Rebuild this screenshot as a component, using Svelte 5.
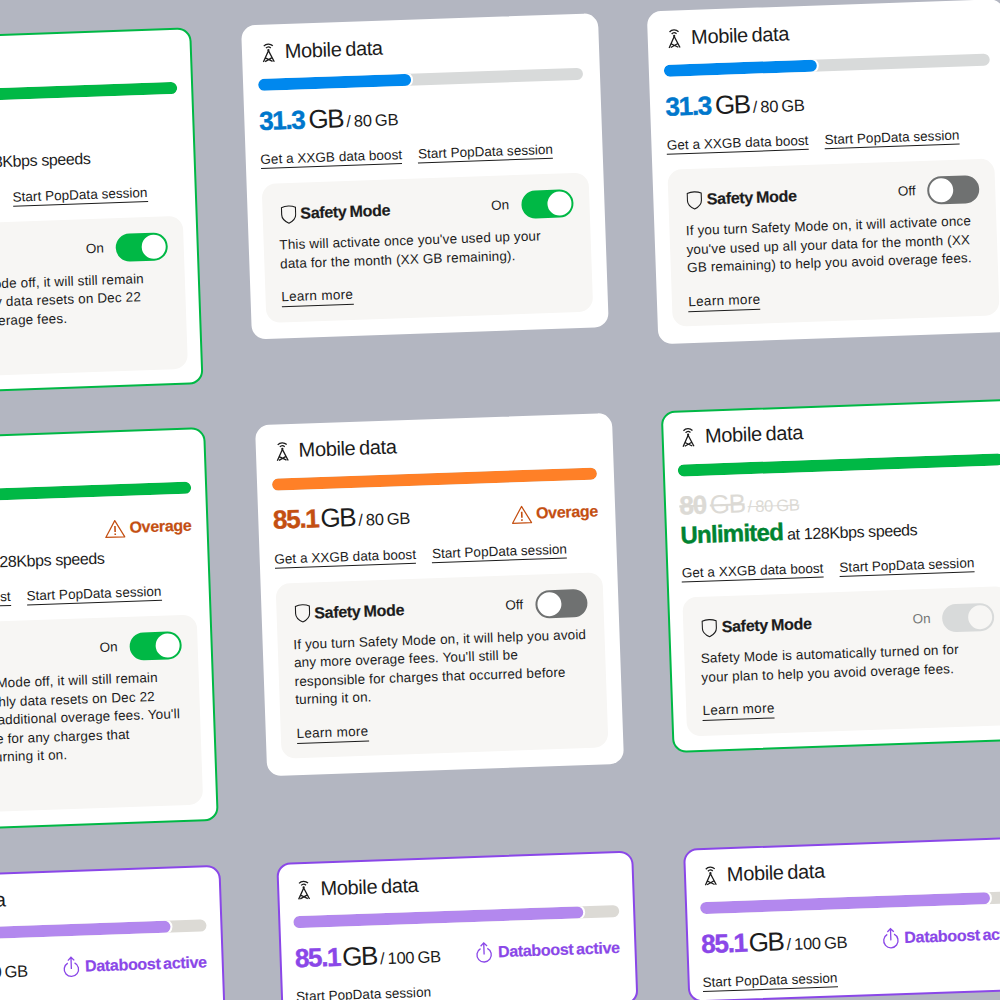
<script>
    const links = ["Get a XXGB data boost", "Start PopData session"];

    const cards = [
        {
            tone: "green", bordered: true, compact: true, fill: 100, used: "80", total: "80 GB", spent: true,
            links, toggle: "on",
            body: ["If you turn Safety Mode off, it will still remain", "on until your monthly data resets on Dec 22", "to help you avoid overage fees."]
        },
        {
            tone: "blue", fill: 47, used: "31.3", total: "80 GB",
            links, toggle: "on",
            body: ["This will activate once you've used up your", "data for the month (XX GB remaining)."]
        },
        {
            tone: "blue", fill: 47, used: "31.3", total: "80 GB",
            links, toggle: "off",
            body: ["If you turn Safety Mode on, it will activate once", "you've used up all your data for the month (XX", "GB remaining) to help you avoid overage fees."]
        },
        {
            tone: "green", bordered: true, compact: true, fill: 100, used: "80", total: "80 GB", spent: true, status: "overage",
            links, toggle: "on",
            body: ["If you turn Safety Mode off, it will still remain", "on until your monthly data resets on Dec 22", "to help you avoid additional overage fees. You'll", "still be responsible for any charges that", "occurred before turning it on."]
        },
        {
            tone: "orange", fill: 100, used: "85.1", total: "80 GB", status: "overage",
            links, toggle: "off",
            body: ["If you turn Safety Mode on, it will help you avoid", "any more overage fees. You'll still be", "responsible for charges that occurred before", "turning it on."]
        },
        {
            tone: "green", bordered: true, fill: 100, used: "80", total: "80 GB", spent: true,
            links, toggle: "locked",
            body: ["Safety Mode is automatically turned on for", "your plan to help you avoid overage fees."]
        },
        { tone: "purple", bordered: true, fill: 89, used: "85.1", total: "100 GB", status: "boost", links: ["Start PopData session"] },
        { tone: "purple", bordered: true, fill: 89, used: "85.1", total: "100 GB", status: "boost", links: ["Start PopData session"], nudged: true },
        { tone: "purple", bordered: true, fill: 89, used: "85.1", total: "100 GB", status: "boost", links: ["Start PopData session"], nudged: true }
    ];
</script>

<div class="page">
    <div class="board">
        {#each cards as card}
            <section class="card {card.tone}" class:bordered={card.bordered} class:nudged={card.nudged} class:compact={card.compact}>
                <header>
                    <svg class="tower" viewBox="0 0 16 22" fill="none" stroke="currentColor" stroke-width="1.4">
                        <path d="M3.2 4.4a6.8 6.8 0 0 1 9.6 0M5.4 6.6a3.7 3.7 0 0 1 5.2 0" />
                        <circle cx="8" cy="8.8" r="1.2" fill="currentColor" stroke="none" />
                        <path d="M8 9.4 2.2 21.4M8 9.4l5.8 12M4.4 17l7.6 4M11.6 17l-7.6 4" />
                    </svg>
                    <h2>Mobile data</h2>
                </header>

                <div class="track">
                    <div class="fill" class:full={card.fill === 100} style:width="{card.fill}%"></div>
                </div>

                <div class="usage">
                    <p class="amount" class:spent={card.spent}>
                        <b class:narrow-end={card.used.endsWith("1")}>{card.used}</b> <span class="unit">GB</span> <span class="total">/ {card.total}</span>
                    </p>
                    {#if card.status === "overage"}
                        <span class="status overage">
                            <svg viewBox="0 0 22 20" fill="none" stroke="currentColor" stroke-width="1.3" stroke-linejoin="round">
                                <path d="M11 1.4 1 18.8h20z" />
                                <path d="M11 7v6.4M11 15v1.6" stroke-width="1.7" />
                            </svg>
                            Overage
                        </span>
                    {:else if card.status === "boost"}
                        <span class="status boost">
                            <svg viewBox="0 0 18 24" fill="none" stroke="currentColor" stroke-width="1.4">
                                <path d="M5.4 7.6a7.6 7.6 0 1 0 7.2 0" />
                                <path d="M9 14V1.6M5.6 5 9 1.6 12.4 5" />
                            </svg>
                            Databoost active
                        </span>
                    {/if}
                </div>

                {#if card.spent}
                    <p class="unlimited"><b>Unlimited</b> at 128Kbps speeds</p>
                {/if}

                <nav>
                    {#each card.links as link}
                        <a href="#top">{link}</a>
                    {/each}
                </nav>

                {#if card.toggle}
                    <div class="panel">
                        <div class="panel-head">
                            <svg class="shield" viewBox="0 0 16 19" fill="none" stroke="currentColor" stroke-width="1.1">
                                <path d="M1 2.4C3 1.5 5.4 1 8 1s5 .5 7 1.4v7.2c0 3.6-3 6.6-7 8.6-4-2-7-5-7-8.6z" />
                            </svg>
                            <h3>Safety Mode</h3>
                            <span class="state" class:muted={card.toggle === "locked"}>{card.toggle === "off" ? "Off" : "On"}</span>
                            <span class="switch {card.toggle}"><i></i></span>
                        </div>
                        <p class="body">
                            {#each card.body as line}
                                <span>{line}</span>
                            {/each}
                        </p>
                        <a class="more" href="#top">Learn more</a>
                    </div>
                {/if}
            </section>
        {/each}
    </div>
</div>

<style>
    :global(body) {
        background: #b3b6c1;
    }

    .page {
        height: 1000px;
        overflow: hidden;
        padding-top: 34.4px;
        box-sizing: border-box;
    }

    .board {
        --dark: #1c1c1c;
        width: 1172px;
        margin-left: -166.8px;
        display: grid;
        grid-template-columns: repeat(3, 357px);
        column-gap: 49.7px;
        row-gap: 42.5px;
        align-items: start;
        transform: rotate(-2deg);
        transform-origin: 166.8px -34.4px;
        font-family: "Liberation Sans", Arial, sans-serif;
        color: var(--dark);
    }

    .card {
        box-sizing: border-box;
        width: 357px;
        background: #fff;
        border: 2px solid #fff;
        border-radius: 14px;
        padding: 12px 13px 8px;
    }

    .card.purple { margin-top: 2px; }
    .card.nudged { margin-left: 6.5px; }
    .card.compact .more { margin-top: 11px; }

    .card.bordered.green { border-color: #00b845; }
    .card.bordered.purple { border-color: #8a47e8; }

    .blue { --bar: #0088ee; --num: #0077cc; --rest: #d8dada; }
    .green { --bar: #00b845; --num: #008331; --rest: #d8dada; }
    .orange { --bar: #ff8027; --num: #c44f12; --rest: #d8dada; }
    .purple { --bar: #b388ee; --num: #8a47e8; --rest: #dcdad5; }

    header {
        display: flex;
        align-items: center;
        gap: 9px;
        height: 26px;
        padding-left: 4px;
    }

    .tower {
        width: 15px;
        height: 21px;
        flex: none;
    }

    h2 {
        margin: 0;
        font-size: 20px;
        font-weight: 400;
        letter-spacing: -0.35px;
        word-spacing: -1.5px;
    }

    .track {
        margin: 14px 1.5px 0 0;
        height: 12px;
        border-radius: 6px;
        background: var(--rest);
        overflow: hidden;
    }

    .fill {
        height: 100%;
        border-radius: 6px;
        background: var(--bar);
        box-shadow: 0 0 0 2px #fff;
    }

    .fill.full {
        box-shadow: none;
    }

    .usage {
        margin-top: 12px;
        min-height: 36px;
        display: flex;
        align-items: center;
        justify-content: space-between;
    }

    .amount {
        margin: 0;
        display: flex;
        align-items: baseline;
        gap: 4px;
        font-size: 26px;
        white-space: nowrap;
    }

    .amount b {
        color: var(--num);
        letter-spacing: -1.3px;
        -webkit-text-stroke: 0.4px;
    }

    .amount b.narrow-end {
        margin-right: -2px;
    }

    .unit {
        letter-spacing: -1.4px;
        margin-right: -1px;
    }

    .total {
        font-size: 16.5px;
        letter-spacing: -0.3px;
        word-spacing: -1px;
    }

    .amount.spent,
    .amount.spent b {
        color: #dcdad5;
        text-decoration: line-through;
    }

    .status {
        display: flex;
        align-items: center;
        gap: 4px;
        margin: 5px 2px 0 0;
        font-size: 16px;
        font-weight: 700;
        letter-spacing: -0.3px;
        word-spacing: -1.5px;
        white-space: nowrap;
        -webkit-text-stroke: 0.2px;
    }

    .status.overage { color: #c44f12; }
    .status.overage svg { width: 21px; height: 19px; }
    .status.boost { color: #8a47e8; margin-top: 1px; }
    .status.boost svg { width: 17px; height: 24px; margin-right: 1px; }

    .unlimited {
        margin: -3px 0 0;
        height: 31.5px;
        font-size: 16px;
        letter-spacing: -0.4px;
        white-space: nowrap;
    }

    .unlimited b {
        color: var(--num);
        font-size: 24px;
        letter-spacing: -0.75px;
        -webkit-text-stroke: 0.4px;
    }

    nav {
        margin-top: 12px;
        height: 18px;
        display: flex;
        gap: 16px;
    }

    a {
        color: var(--dark);
        font-size: 13.5px;
        line-height: 18px;
        letter-spacing: 0.03px;
        text-decoration: none;
        border-bottom: 1px solid var(--dark);
        white-space: nowrap;
    }

    .panel {
        margin: 15px 0 6.5px;
        padding: 17px 16px 14.5px;
        background: #f7f6f4;
        border-radius: 14px;
    }

    .panel-head {
        display: flex;
        align-items: center;
        height: 28px;
        padding-left: 2px;
    }

    .shield {
        width: 16px;
        height: 19px;
        flex: none;
        margin-right: 4px;
    }

    h3 {
        margin: 0 auto 0 0;
        font-size: 16px;
        letter-spacing: -0.3px;
        word-spacing: -1px;
        -webkit-text-stroke: 0.2px;
    }

    .state {
        font-size: 13.5px;
        margin: -3px 12px 0 0;
    }

    .state.muted { color: #747676; }

    .switch {
        width: 52px;
        height: 28px;
        box-sizing: border-box;
        margin-top: -2px;
        padding: 2px;
        border-radius: 14px;
        display: flex;
        flex: none;
    }

    .switch i {
        width: 24px;
        height: 24px;
        border-radius: 50%;
        background: #fff;
    }

    .switch.on { background: #00b845; justify-content: flex-end; }
    .switch.off { background: #6f7171; }
    .switch.locked { background: #d8dada; justify-content: flex-end; }
    .switch.locked i { background: #f7f6f4; }

    .body {
        margin: 8px 0 0;
        font-size: 13.5px;
        line-height: 18.5px;
        letter-spacing: 0.14px;
    }

    .body span {
        display: block;
        white-space: nowrap;
    }

    .more {
        display: inline-block;
        margin-top: 15px;
        letter-spacing: 0.3px;
    }
</style>
